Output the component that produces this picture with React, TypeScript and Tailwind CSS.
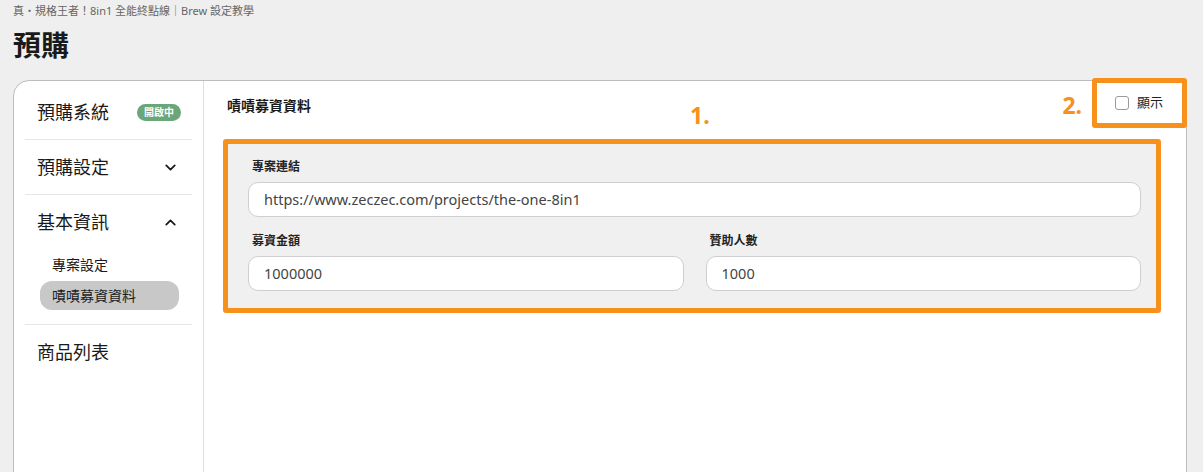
import React from "react";
import { ChevronDown, ChevronUp } from "lucide-react";

const FONT = { fontFamily: '"Noto Sans", "Noto Sans CJK TC", sans-serif' };

const Field: React.FC<{ label: string; value: string }> = ({ label, value }) => (
  <div className="flex flex-col">
    <span className="pl-[4px] text-[12px] font-bold leading-[16px] text-[#222] mb-[7px]">{label}</span>
    <div className="h-[35px] flex items-center rounded-[10px] border border-[#cfcfcf] bg-white pl-[15px] text-[14.5px] text-[#444]">
      {value}
    </div>
  </div>
);

export default function App() {
  return (
    <div className="h-[472px] overflow-hidden bg-[#efefef] px-[13px] pt-[3px]" style={FONT}>
      <p className="text-[11px] leading-[16px] text-[#666]">真・規格王者！8in1 全能終點線｜Brew 設定教學</p>
      <h1 className="mt-[9px] text-[28px] font-bold leading-[34px] text-[#1a1a1a]">預購</h1>

      <div className="mt-[18px] flex h-[420px] w-[1174px] rounded-t-[16px] border border-[#bcbcbc] bg-white">
        {/* sidebar */}
        <div className="w-[190px] shrink-0 border-r border-[#dedede] px-[11px] pt-[4px] text-[#1a1a1a]">
          <div className="flex h-[55px] items-center border-b border-[#e6e6e6] pl-[12px]">
            <span className="text-[18px]">預購系統</span>
            <span className="ml-[28px] rounded-full bg-[#6ba57a] px-[7px] text-[10px] font-bold leading-[17px] text-white">開啟中</span>
          </div>
          <div className="flex h-[55px] items-center justify-between border-b border-[#e6e6e6] pl-[12px] pr-[13px]">
            <span className="text-[18px]">預購設定</span>
            <ChevronDown size={17} strokeWidth={2.5} />
          </div>
          <div className="flex h-[55px] items-center justify-between pl-[12px] pr-[13px]">
            <span className="text-[18px]">基本資訊</span>
            <ChevronUp size={17} strokeWidth={2.5} />
          </div>
          <div className="border-b border-[#e6e6e6] pb-[14px]">
            <div className="flex h-[28px] items-center pl-[27px] text-[14px]">專案設定</div>
            <div className="mt-[3px] ml-[15px] flex h-[29px] w-[139px] items-center rounded-[12px] bg-[#c8c8c8] pl-[12px] text-[14px]">
              嘖嘖募資資料
            </div>
          </div>
          <div className="flex h-[55px] items-center pl-[12px]">
            <span className="text-[18px]">商品列表</span>
          </div>
        </div>

        {/* main */}
        <div className="flex-1 pl-[19px]">
          <div className="mt-[-3px] mr-[-1px] flex items-start">
            <div className="w-[467px] pl-[4px] pt-[19px] text-[14px] font-semibold leading-[18px] text-[#1a1a1a]">
              嘖嘖募資資料
            </div>
            <div className="pt-[25px] text-[23px] font-bold leading-[24px] text-[#f7911b]">1.</div>
            <div className="flex-1" />
            <div className="pt-[15px] text-[23px] font-bold leading-[24px] text-[#f7911b]">2.</div>
            <div className="ml-[10px] flex h-[50px] w-[95px] items-center rounded-[3px] border-[5px] border-[#f7911b] bg-white pl-[18px]">
              <span className="h-[14px] w-[14px] rounded-[3px] border border-[#9a9a9a] bg-white" />
              <span className="ml-[8px] text-[13px] text-[#222]">顯示</span>
            </div>
          </div>

          <div className="mt-[11px] w-[938px] rounded-[3px] border-[5px] border-[#f7911b] bg-[#f0f0f0] pt-[15px] pb-[17px] pl-[20px] pr-[15px]">
            <Field label="專案連結" value="https://www.zeczec.com/projects/the-one-8in1" />
            <div className="mt-[16px] grid grid-cols-2 gap-x-[22px]">
              <Field label="募資金額" value="1000000" />
              <Field label="贊助人數" value="1000" />
            </div>
          </div>
        </div>
      </div>
    </div>
  );
}
